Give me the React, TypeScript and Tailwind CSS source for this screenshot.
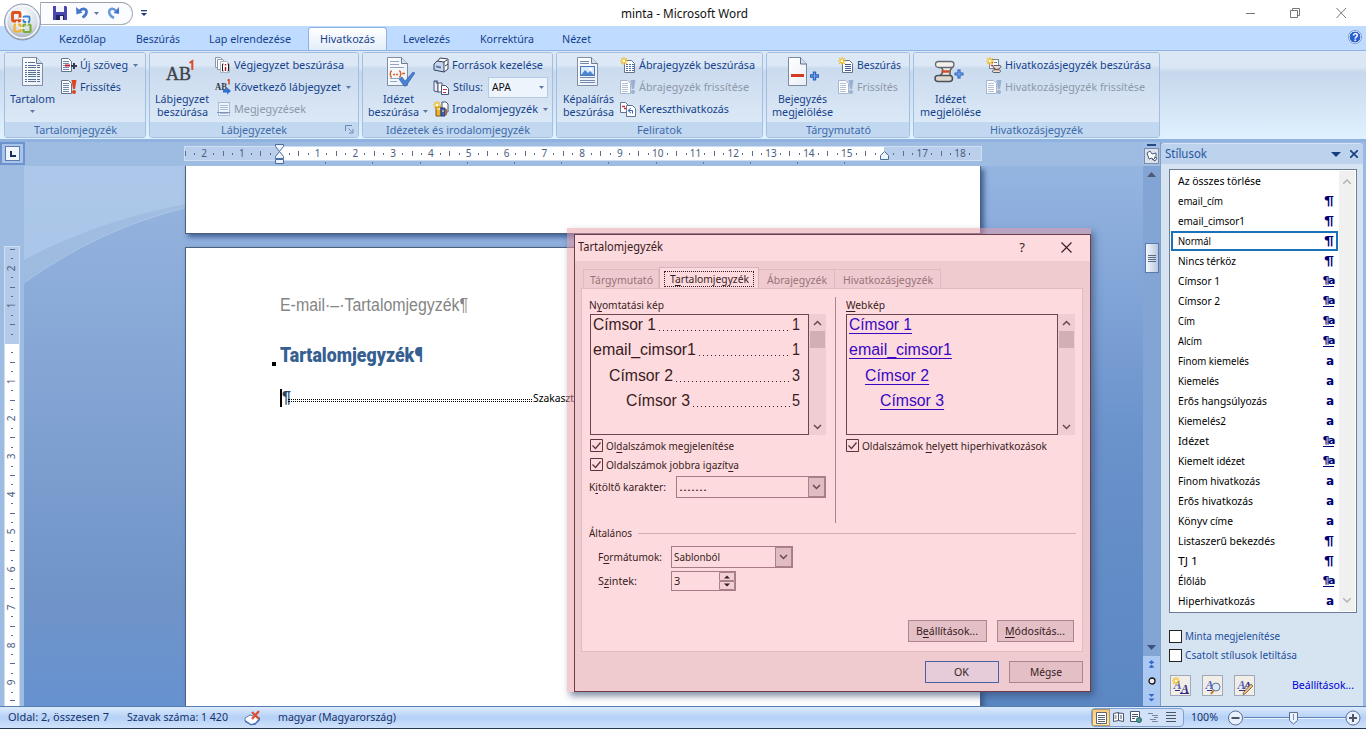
import { useLayoutEffect, useRef, type ReactNode } from "react";

type FitProps = { w: number; children: ReactNode; className?: string };

/* Sets a run of text to a given measure by condensing or widening the glyphs. */
function Fit({ w, children, className = "" }: FitProps) {
  const ref = useRef<HTMLSpanElement>(null);
  useLayoutEffect(() => {
    const el = ref.current;
    if (!el) return;
    el.style.transform = "none";
    const natural = el.getBoundingClientRect().width;
    el.style.transform = `scaleX(${w / natural})`;
    el.style.marginRight = `${w - natural}px`;
  }, [w]);
  return (
    <span ref={ref} className={`inline-block shrink-0 origin-left whitespace-pre ${className}`}>
      {children}
    </span>
  );
}

const Caret = ({ className = "" }: { className?: string }) => (
  <svg width="5" height="3" viewBox="0 0 5 3" className={`shrink-0 ${className}`}>
    <path d="M0 0h5L2.5 3z" fill="#5b78a8" />
  </svg>
);

/* ---------- icons ---------- */

const Star = () => (
  <g stroke="#f2b91d" strokeWidth="1.2">
    <path d="M4 0v8M0 4h8M1.2 1.2l5.6 5.6M6.8 1.2L1.2 6.8" />
    <circle cx="4" cy="4" r="1.4" fill="#fffbd0" stroke="none" />
  </g>
);

type IconName =
  | "addText" | "update" | "updateOff" | "endnote" | "nextNote" | "notes" | "sources"
  | "style" | "biblio" | "figures" | "crossref" | "index" | "authorities";

function Icon({ name }: { name: IconName }) {
  const doc = (x: number, y: number, w: number, h: number, c = "#65748e") => (
    <path d={`M${x} ${y}h${w - 3}l3 3v${h - 3}h-${w}z`} fill="#fff" stroke={c} strokeWidth="1" />
  );
  const lines = (x: number, y: number, w: number, n: number, c = "#6f8bb3") =>
    Array.from({ length: n }, (_, i) => <path key={i} d={`M${x} ${y + i * 2}h${w}`} stroke={c} strokeWidth="1" />);
  return (
    <svg width="16" height="16" viewBox="0 0 16 16" fill="none" className="shrink-0">
      {name === "addText" && (<>{doc(0.5, 1.5, 10, 13)}{lines(2, 4.5, 6, 5)}<path d="M4 8.500h5" stroke="#c8202c" strokeWidth="2" /><path d="M13 6v6M10 9h6" stroke="#333d55" strokeWidth="2" /></>)}
      {name === "update" && (<>{doc(0.5, 1.5, 10, 13)}{lines(2, 4.5, 6, 5)}<path d="M10.500 1h5l-1.500 9h-2z" fill="#dd4523" /><circle cx="13" cy="13" r="2" fill="#dd4523" /></>)}
      {name === "updateOff" && (<>{doc(0.5, 1.5, 10, 13, "#a6b6cf")}{lines(2, 4.5, 6, 5, "#b3c2d8")}<path d="M10.500 1h5l-1.500 9h-2z" fill="#9bb0d0" /><circle cx="13" cy="13" r="2" fill="#9bb0d0" /></>)}
      {name === "endnote" && (<>{doc(0.5, 0.5, 8, 10, "#8a96ab")}{doc(2.5, 2.5, 8, 10, "#8a96ab")}{doc(5.5, 4.5, 9, 11, "#a9b3c3")}<path d="M8.5 7h-1v7h1M12.500 7h1v7h-1" stroke="#222" /><path d="M10.500 7v1.500M10.500 10v4" stroke="#b02030" strokeWidth="1.500" /></>)}
      {name === "nextNote" && (<><text x="0" y="11" fontSize="10" fontFamily="Liberation Serif" fontWeight="bold" fill="#303848" textLength="12" lengthAdjust="spacingAndGlyphs">AB</text><path d="M12.500 1.500l1.500-1v5" stroke="#d83820" strokeWidth="1.400" /><path d="M8 10.500h4V8.500l4 3.500-4 3.500v-2H8z" fill="#2f6fd0" /></>)}
      {name === "notes" && (<><rect x="3.5" y="1.5" width="11" height="13" fill="#eef4fb" stroke="#a9bbd6" />{lines(5, 4.5, 8, 3, "#a9bbd6")}<path d="M2 11.5h13" stroke="#7d94ba" />{lines(5, 12.5, 8, 1, "#a9bbd6")}</>)}
      {name === "sources" && (<><path d="M4 5L7 1l8 1v10l-4 3z" fill="#fff" stroke="#35415c" /><path d="M1 7l3-3 7 1v10L1 13z" fill="#c7d5ea" stroke="#35415c" /><path d="M3 8.5l5 1v2l-5-1z" fill="#5c7db0" /><path d="M11 5l3-2M12 9l3-2" stroke="#35415c" /></>)}
      {name === "style" && (<><path d="M1 2v10l4 1V4zM4 2v3M1 2h4" stroke="#4a5878" fill="#e8eef7" /><path d="M5 4h4v9H5z" fill="#fff" stroke="#4a5878" />{doc(8.5, 6.5, 7, 9, "#4a5878")}<path d="M10 10.5h4M10 13.5h3" stroke="#b93048" /></>)}
      {name === "biblio" && (<><path d="M9 1h4l2 2v8H9z" fill="#fff" stroke="#44546f" /><path d="M3 6h5v9H3z" fill="#efb22b" stroke="#7b5a1a" /><path d="M8 7h4v8H8z" fill="#3b62bd" stroke="#24407d" /><path d="M12 8h2v6h-2z" fill="#aa6a35" /><path d="M4 8h3M9 10h2" stroke="#fff" /><Star /></>)}
      {name === "figures" && (<>{doc(4.5, 3.5, 10, 12)}<path d="M6 7.5h2m1 0h2m1 0h2M6 9.5h2m1 0h2m1 0h2M6 11.5h2m1 0h2m1 0h2M6 13.5h2m1 0h2m1 0h2" stroke="#4a69a5" /><Star /></>)}
      {name === "index" && (<>{doc(4.5, 3.5, 10, 12)}{lines(7, 7.5, 6, 4, "#3f5a8e")}<Star /></>)}
      {name === "crossref" && (<>{doc(0.5, 1.5, 8, 10)}<path d="M2 5.5h3M4 7.5h2" stroke="#c83048" strokeWidth="1.5" />{doc(6.5, 4.5, 9, 11)}<path d="M9 9.5h3.5v3M11 7l-3 2.5 3 2.5" stroke="#3461b8" /></>)}
      {name === "authorities" && (<><rect x="3.500" y="2.500" width="9" height="9" fill="#fff" stroke="#7d8595" /><path d="M5 5.500h2M5 8.500h2" stroke="#c8302c" strokeWidth="1.500" /><path d="M8 5.500h3M8 8.500h3" stroke="#66738c" /><path d="M8 8.500h6c1.500 0 1 2.500 0 2.500h-1l-.5 2h1c1.500 0 1 2.500 0 2.500H7.500c-1.500 0-1-2.500 0-2.500h1l.5-2H8c-1.500 0-1-2.500 0-2.500z" fill="#e5e1d8" stroke="#4d5058" strokeWidth=".9" /><path d="M9 12.500h3" stroke="#b74432" strokeWidth="1.300" /><Star /></>)}
    </svg>
  );
}

const BigDoc = ({ kind }: { kind: "toc" | "cite" | "caption" | "entry" }) => (
  <svg width="34" height="34" viewBox="0 0 34 34" fill="none">
    <defs>
      <linearGradient id={`pg-${kind}`} x1="0" y1="0" x2="1" y2="1">
        <stop offset="0" stopColor="#ffffff" /><stop offset="1" stopColor="#e9eef6" />
      </linearGradient>
    </defs>
    {kind === "entry" ? (
      <>
        <path d="M2.500 2.500h12l6 6.500v21.500h-18z" fill="url(#pg-entry)" stroke="#7c8aa2" />
        <path d="M14.500 2.500v6.500h6" fill="#d5dfed" stroke="#5f6f8b" />
        <path d="M5 20.500h13" stroke="#d13d1d" strokeWidth="3" />
        <path d="M28.500 16.500v9M24 21h9" stroke="#2d62bd" strokeWidth="3.400" />
        <path d="M28.500 17.500v7M25 21h7" stroke="#79a7ee" strokeWidth="1" />
      </>
    ) : (
      <>
        <path d="M6.500 2.500h14l6 6v22h-20z" fill={`url(#pg-${kind})`} stroke="#7f8da5" />
        <path d="M20.500 2.500v6h6" fill="#d5dfed" stroke="#6c7b95" />
      </>
    )}
    {kind === "toc" && <path d="M9 7.500h2m1 0h7M9 10.500h2m1 0h8m1 0h3M9 12.500h2m1 0h8m1 0h3M9 15.500h2m1 0h8m1 0h3M9 17.500h2m1 0h8m1 0h3M9 19.500h2m1 0h8m1 0h3M9 21.500h2m1 0h8m1 0h3M9 24.500h2m1 0h8m1 0h3M9 26.500h2m1 0h8m1 0h3" stroke="#566f97" />}
    {kind === "cite" && (
      <>
        <path d="M9 6.500h9M9 9.500h9M9 12.500h14M9 23.500h9M9 26.500h7" stroke="#91a5c4" />
        <path d="M11 16c-3 0 0 3-2.500 3 2.500 0-.5 3 2.500 3M18 16c3 0 0 3 2.500 3-2.500 0 .5 3-2.500 3" stroke="#d8632a" strokeWidth="1.300" />
        <path d="M12 19.500h2m1 0h2M21 18.500h3" stroke="#d8632a" strokeWidth="1.300" />
        <path d="M18 24l3-2 3 4 8-9 2 1-9 13h-2z" fill="#4a80d0" stroke="#2a5eb0" strokeWidth=".6" />
      </>
    )}
    {kind === "caption" && (
      <>
        <path d="M9 6.500h9M9 8.500h9M9 22.500h15M9 25.500h15M9 27.500h15" stroke="#7288aa" />
        <rect x="9.500" y="11.500" width="14" height="9" fill="#d9ecff" stroke="#4b78bd" />
        <path d="M10 20l4-5 3 3 2-2 4 4z" fill="#4d86cf" /><circle cx="19.500" cy="14" r="1.300" fill="#fff" />
      </>
    )}
  </svg>
);

const FootnoteIcon = () => (
  <svg width="34" height="34" viewBox="0 0 34 34" fill="none">
    <text x="1" y="25" fontSize="19" fontFamily="Liberation Serif" fill="#3e4348" stroke="#3e4348" strokeWidth=".4" textLength="25" lengthAdjust="spacingAndGlyphs">AB</text>
    <path d="M24.500 8l2.800-1.800V15" stroke="#e04726" strokeWidth="2" />
  </svg>
);

const ScrollIcon = () => (
  <svg width="34" height="34" viewBox="0 0 34 34" fill="none">
    <path d="M9 9h11c0 3-3 4-3 7 0 2 1 4 1 6H6c3-2 4-4 4-7 0-2-1-3-1-6z" fill="#eeece6" />
    <path d="M8 12.500c4 3 1 7-2 9M20 12c-4 3-4 6-2 9.500" stroke="#55585e" strokeWidth="1.500" />
    <rect x="2.500" y="6.500" width="18.500" height="6" rx="3" fill="#f3f1eb" stroke="#66696f" strokeWidth="1.300" />
    <rect x="2" y="20.500" width="17.500" height="6" rx="3" fill="#dcd8cf" stroke="#4d5056" strokeWidth="1.500" />
    <path d="M8.500 16.500h8" stroke="#cc4d2a" strokeWidth="2.600" />
    <path d="M26 14.500v9M21.500 19h9" stroke="#2d62bd" strokeWidth="3.200" />
    <path d="M26 15.500v7M22.500 19h7" stroke="#86b0f0" strokeWidth="1" />
  </svg>
);

/* ---------- ribbon ---------- */

function Small({ icon, w, text, caret, off }: { icon: IconName; w: number; text: string; caret?: boolean; off?: boolean }) {
  return (
    <div className={`flex h-[22px] items-center ${off ? "text-[#8d98aa]" : "text-[#15428b]"}`}>
      <Icon name={icon} />
      <Fit w={w} className="ml-[3px]">{text}</Fit>
      {caret && <Caret className="ml-[5px]" />}
    </div>
  );
}

function Group({ width, label, lw, launcher, children }: { width: string; label: string; lw: number; launcher?: boolean; children: ReactNode }) {
  return (
    <section className={`flex h-[86px] shrink-0 flex-col overflow-hidden rounded-[3px] border border-[#a3bfe0] shadow-[inset_1px_1px_0_#e4eefa] ${width}`}>
      <div className="flex h-[69px] bg-linear-to-b from-[#dce8f6] from-18% via-[#cbdbee] via-22% to-[#dbe8f6] pt-px">{children}</div>
      <div className="flex h-[15px] items-center justify-center bg-[#c1d8f0] text-[#3e6aaa]">
        <Fit w={lw}>{label}</Fit>
        {launcher && (
          <svg width="9" height="9" viewBox="0 0 9 9" className="absolute ml-[190px]" fill="none" stroke="#6986b4">
            <path d="M.5 6V.5H7M3.500 3.500l3 3M8 4v4H4" />
          </svg>
        )}
      </div>
    </section>
  );
}

function Big({ className, icon, children }: { className: string; icon: ReactNode; children: ReactNode }) {
  return (
    <div className={`flex shrink-0 flex-col items-center pt-px text-[#15428b] ${className}`}>
      <div className="h-[37px]">{icon}</div>
      <div className="flex flex-col items-center leading-[13px]">{children}</div>
    </div>
  );
}

function Ribbon() {
  return (
    <div className="flex h-[92px] shrink-0 items-start border-b-[3px] border-t border-b-[#8fb2e0] border-t-[#8db2e3] bg-linear-to-b from-[#dbe7f5] from-18% via-[#c7d8ed] via-24% to-[#e0f1ff] px-1 pt-px text-[11.5px] leading-[14px]">
      <div className="flex gap-[3px]">
        <Group width="w-[142px]" label="Tartalomjegyzék" lw={83}>
          <Big className="w-[56px] pr-px" icon={<BigDoc kind="toc" />}>
            <Fit w={45}>Tartalom</Fit><Caret className="mt-[5px]" />
          </Big>
          <div>
            <Small icon="addText" w={48} text="Új szöveg" caret />
            <Small icon="update" w={41} text="Frissítés" />
          </div>
        </Group>
        <Group width="w-[210px]" label="Lábjegyzetek" lw={66} launcher>
          <Big className="w-[65px] pr-px" icon={<FootnoteIcon />}>
            <Fit w={54}>Lábjegyzet</Fit><Fit w={51}>beszúrása</Fit>
          </Big>
          <div>
            <Small icon="endnote" w={110} text="Végjegyzet beszúrása" />
            <Small icon="nextNote" w={107} text="Következő lábjegyzet" caret />
            <Small icon="notes" w={72} text="Megjegyzések" off />
          </div>
        </Group>
        <Group width="w-[191px]" label="Idézetek és irodalomjegyzék" lw={144}>
          <Big className="w-[70px]" icon={<BigDoc kind="cite" />}>
            <Fit w={31}>Idézet</Fit>
            <span className="flex items-center"><Fit w={51}>beszúrása</Fit><Caret className="ml-1" /></span>
          </Big>
          <div>
            <Small icon="sources" w={91} text="Források kezelése" />
            <div className="flex h-[22px] items-center text-[#15428b]">
              <Icon name="style" /><Fit w={30} className="ml-1">Stílus:</Fit>
              <div className="ml-[5px] flex h-[21px] w-[60px] items-center justify-between border border-[#b4cbe8] bg-[#edf4fc] px-[3px] text-[#111]">
                <Fit w={19}>APA</Fit><Caret />
              </div>
            </div>
            <Small icon="biblio" w={86} text="Irodalomjegyzék" caret />
          </div>
        </Group>
        <Group width="w-[207px]" label="Feliratok" lw={45}>
          <Big className="w-[63px] pr-px" icon={<BigDoc kind="caption" />}>
            <Fit w={51}>Képaláírás</Fit><Fit w={51}>beszúrása</Fit>
          </Big>
          <div>
            <Small icon="figures" w={116} text="Ábrajegyzék beszúrása" />
            <Small icon="updateOff" w={110} text="Ábrajegyzék frissítése" off />
            <Small icon="crossref" w={90} text="Kereszthivatkozás" />
          </div>
        </Group>
        <Group width="w-[144px]" label="Tárgymutató" lw={65}>
          <Big className="w-[71px]" icon={<BigDoc kind="entry" />}>
            <Fit w={49}>Bejegyzés</Fit><Fit w={61}>megjelölése</Fit>
          </Big>
          <div>
            <Small icon="index" w={44} text="Beszúrás" />
            <Small icon="updateOff" w={41} text="Frissítés" off />
          </div>
        </Group>
        <Group width="w-[247px]" label="Hivatkozásjegyzék" lw={93}>
          <Big className="w-[72px]" icon={<ScrollIcon />}>
            <Fit w={31}>Idézet</Fit><Fit w={61}>megjelölése</Fit>
          </Big>
          <div>
            <Small icon="authorities" w={146} text="Hivatkozásjegyzék beszúrása" />
            <Small icon="updateOff" w={140} text="Hivatkozásjegyzék frissítése" off />
          </div>
        </Group>
      </div>
    </div>
  );
}

function TitleBar() {
  return (
    <header className="flex h-[26px] shrink-0 items-center bg-white text-[#111]">
      <div className="ml-[40px] flex h-[23px] w-[93px] items-center rounded-r-full border border-t-[#9aa0aa] border-[#a9b0bb] bg-[#fafcff] pl-3">
        <svg width="14" height="14" viewBox="0 0 14 14" className="shrink-0">
          <path d="M0 0h13l1 1v13H0z" fill="#4a46b0" /><path d="M3 0h8v6H3z" fill="#f3f5ff" /><path d="M3 9h8v5H3z" fill="#26215f" /><path d="M7 10h3v4H7z" fill="#eee" />
        </svg>
        <svg width="14" height="14" viewBox="0 0 14 14" fill="none" className="ml-2 shrink-0">
          <path d="M4 5.500c4-4.500 8-2.500 7.500 1-.3 2-1.500 3.500-4 5" stroke="#4577c8" strokeWidth="2.600" /><path d="M1 1l.5 7.500 6-2z" fill="#4577c8" />
        </svg>
        <Caret className="ml-[5px]" />
        <svg width="14" height="14" viewBox="0 0 14 14" fill="none" className="ml-2 shrink-0">
          <path d="M9 5C6 1 1 3 2.500 7.500 3 10 5 11 7 12" stroke="#6b9ad8" strokeWidth="2.600" /><path d="M12 1v7L6.500 7z" fill="#4577c8" />
        </svg>
      </div>
      <svg width="6" height="7" viewBox="0 0 6 7" className="ml-2"><path d="M0 0h6v1.300H0zM0 3h6L3 6z" fill="#1e3e78" /></svg>
      <div className="ml-[474px] pt-[2px] text-[12px]"><Fit w={127}>minta - Microsoft Word</Fit></div>
      <svg width="102" height="12" viewBox="0 0 102 12" fill="none" stroke="#777" className="ml-auto mr-[19px]">
        <path d="M1 6.500h9" /><path d="M45.500 3.500h7v7h-7zM47.500 3V1.500h7v7H53" /><path d="M91.500 1l9.500 10M101 1l-9.500 10" />
      </svg>
    </header>
  );
}

function OfficeButton() {
  return (
    <svg width="40" height="40" viewBox="0 0 40 40" className="absolute left-[2px] top-[2px]" fill="none">
      <defs>
        <radialGradient id="orb" cx=".5" cy=".3" r=".75"><stop offset="0" stopColor="#fff" /><stop offset=".6" stopColor="#d6dce6" /><stop offset="1" stopColor="#8b97aa" /></radialGradient>
      </defs>
      <circle cx="20.500" cy="20" r="18" fill="url(#orb)" stroke="#8e9bb0" />
      <circle cx="20.500" cy="20" r="16" stroke="#f7f9fc" strokeWidth="1.500" />
      <rect x="10.500" y="10.500" width="7.500" height="8.500" rx="1" stroke="#dd521c" strokeWidth="2.800" />
      <rect x="21.500" y="14.500" width="6" height="5.500" rx="1" stroke="#3b83cf" strokeWidth="1.800" />
      <rect x="12.500" y="22.500" width="6" height="7" rx="1" stroke="#f2b02b" strokeWidth="2.200" />
      <rect x="21.500" y="22.500" width="7" height="7.500" rx="1" stroke="#79ae35" strokeWidth="2.200" />
      <path d="M17 16.500h6M17 26h6M15 19v5M25 18v5" stroke="#fff" strokeWidth="1.500" />
    </svg>
  );
}

function Tabs() {
  return (
    <nav className="flex h-[24px] shrink-0 items-center bg-[#bfdbff] pt-[2px] text-[11.5px] text-[#15428b]">
      <Fit w={47} className="ml-[59px]">Kezdőlap</Fit>
      <Fit w={44} className="ml-[30px]">Beszúrás</Fit>
      <Fit w={82} className="ml-[29px]">Lap elrendezése</Fit>
      <div className="ml-[17px] flex h-[23px] w-[79px] items-center justify-center self-end rounded-t-[3px] border border-b-0 border-[#8db2e3] bg-linear-to-b from-white to-[#e3edf9]">
        <Fit w={55}>Hivatkozás</Fit>
      </div>
      <Fit w={47} className="ml-[16px]">Levelezés</Fit>
      <Fit w={54} className="ml-[30px]">Korrektúra</Fit>
      <Fit w={29} className="ml-[28px]">Nézet</Fit>
      <svg width="14" height="14" viewBox="0 0 14 14" className="mb-[4px] ml-auto mr-1">
        <circle cx="7" cy="7" r="6" fill="#2a60cf" stroke="#fff" /><circle cx="7" cy="7" r="6.600" fill="none" stroke="#5c83c5" strokeWidth=".7" />
        <text x="4.200" y="10.600" fontSize="10" fontWeight="bold" fontFamily="Liberation Sans" fill="#fff">?</text>
      </svg>
    </nav>
  );
}

/* ---------- rulers and pages ---------- */

const hMarks = ["2", "1", "", "1", "2", "3", "4", "5", "6", "7", "8", "9", "10", "11", "12", "13", "14", "15", "", "17", "18"];
const vMarks = ["2", "1", "", "1", "2", "3", "4", "5", "6", "7", "8", "9"];

function HRuler() {
  return (
    <div className="flex h-[24px] shrink-0">
      <div className="flex h-[23px] w-[25px] items-center justify-center border-2 border-[#6d93cf] bg-[#a9c4e8]">
        <div className="flex h-[15px] w-[15px] items-center justify-center border border-[#5c7db4] bg-[#f0f5fc]">
          <div className="h-[6px] w-[6px] border-b-2 border-l-2 border-[#16305c]" />
        </div>
      </div>
      <div className="ml-[160px] w-[796px]">
        <div className="mt-[5px] flex h-[13px] overflow-hidden bg-linear-to-r from-[#b9cfec] from-[94px] via-white via-[94px] to-white outline outline-[#cfdff3]">
          <div className="-ml-[4.5px] flex bg-linear-to-r from-transparent from-[703px] to-[#b9cfec] to-[703px]">
            {hMarks.map((m, i) => (
              <div key={i} className="grid w-[37.8px] shrink-0 grid-cols-4 items-center justify-items-center text-[10px] leading-[13px] text-[#4b5d80]">
                <i className="h-[5px] w-px bg-[#5b6b8c]" /><i className="h-[2px] w-px bg-[#5b6b8c]" />
                <span>{m}</span><i className="h-[2px] w-px bg-[#5b6b8c]" />
              </div>
            ))}
          </div>
          <div className="grow bg-[#b9cfec]" />
        </div>
        <div className="ml-[94px] mt-[2px] flex h-[2px] overflow-hidden">
          {Array.from({ length: 12 }, (_, i) => <i key={i} className="w-[47.2px] shrink-0 border-r border-[#5c7cae]" />)}
        </div>
      </div>
      <svg width="620" height="22" viewBox="0 0 620 22" className="absolute left-[270px] top-[143px]" fill="#eef4fc" stroke="#4c6ba1">
        <path d="M5.500 1.500h8v2l-4 5 4 5v2h-8v-2l4-5-4-5zM5.500 16.500h8v4h-8zM614.500 8.500l4 4v4h-8v-4z" />
      </svg>
    </div>
  );
}

function VRuler() {
  return (
    <div className="w-[24px] shrink-0 bg-[#9ebbe2] pt-[81px]">
      <div className="ml-[5px] flex h-[459px] w-[14px] flex-col overflow-hidden bg-linear-to-b from-[#b4caeb] from-[97px] to-white to-[97px] outline outline-[#cfdff3]">
        {vMarks.map((m, i) => (
          <div key={i} className="-mt-[2.4px] mb-[2.4px] grid h-[37.7px] shrink-0 grid-rows-4 items-center justify-items-center text-[10px] leading-[9px] text-[#4b5d80]">
            <i className="h-px w-[5px] bg-[#5b6b8c]" /><i className="h-px w-[2px] bg-[#5b6b8c]" />
            <span className="-rotate-90">{m}</span><i className="h-px w-[2px] bg-[#5b6b8c]" />
          </div>
        ))}
        <i className="mt-px h-px w-[5px] shrink-0 self-center bg-[#5b6b8c]" />
      </div>
    </div>
  );
}

function Canvas() {
  return (
    <div className="relative w-[1119px] overflow-hidden bg-linear-to-b from-[#9bb9e3] via-[#7397ca] via-50% to-[#6591cd]">
      <div className="absolute inset-y-0 left-0 w-[161px] bg-linear-to-b from-[#97b5e0] via-[#7094c8] via-50% via-[#5a81b8] via-80% to-[#6692d0]" />
      <div className="absolute inset-y-0 right-0 w-[163px] bg-linear-to-b from-[#95b5e1] via-[#6a92cb] via-50% to-[#5b87c3]" />
      <svg width="161" height="120" viewBox="0 0 161 120" className="absolute left-0 top-0">
        <path d="M0 0h161v42Q75 63 0 117z" fill="#b7cfe9" opacity=".4" />
        <path d="M0 0h161v38Q70 56 0 94z" fill="#b3cdec" opacity=".6" />
        <path d="M0 117Q75 63 161 42" fill="none" stroke="#b6cee9" opacity=".6" />
      </svg>
      <div className="relative ml-[161px] flex h-full w-[796px] flex-col">
        <div className="h-[68px] shrink-0 border border-t-0 border-[#4e5f7e] bg-white shadow-[3px_3px_5px_#3f5f92]" />
        <div className="mt-[13px] h-[470px] shrink-0 border border-[#4e5f7e] bg-white pl-[94px] shadow-[3px_3px_5px_#3f5f92]">
          <div className="mt-[46px] h-[22px] font-['Liberation_Sans'] text-[17.5px] leading-[22px] text-[#858585]">
            <Fit w={188}>E-mail·–·Tartalomjegyzék¶</Fit>
          </div>
          <div className="-ml-[8px] mt-[27px] flex h-[24px] items-center gap-[4px] font-[Roboto] text-[20.5px] font-black leading-[24px] text-[#365f91]">
            <i className="mt-[18px] h-[4px] w-[4px] bg-black" />
            <Fit w={143}>Tartalomjegyzék¶</Fit>
          </div>
          <div className="mt-[21px] flex h-[20px] items-center text-[11px] text-black">
            <i className="h-[18px] w-[2px] bg-black" />
            <span className="w-[6px] font-['Liberation_Sans'] text-[16px] font-bold leading-[18px] text-[#274766]">¶</span>
            <i className="mt-[5px] h-[3px] w-[244px] border-y border-dotted border-black" />
            <Fit w={41} className="ml-px pt-px">Szakaszt</Fit>
          </div>
        </div>
      </div>
    </div>
  );
}

function VScroll() {
  return (
    <div className="flex w-[17px] shrink-0 flex-col items-center bg-[#83a5d5] text-[#2f4a7c]">
      <div className="flex h-[24px] w-full shrink-0 flex-col items-center bg-[#a1bee6]">
        <i className="mt-[2px] h-[2px] w-[9px] shrink-0 bg-[#264785]" />
        <div className="mt-[2px] flex h-[16px] w-[15px] items-center justify-center border border-[#7d8ba5] bg-[#dae2ee]">
          <svg width="12" height="12" viewBox="0 0 12 12" fill="#fff" stroke="#46587a"><path d="M1 3l3-2 2 3 4-1v4l-3 3-1-2-3 1zM8 7l3 1-2 3-3-2" /></svg>
        </div>
      </div>
      <svg width="9" height="5" className="mt-[6px] shrink-0"><path d="M4.500 0L9 5H0z" fill="#4e5b75" /></svg>
      <div className="mt-[66px] flex h-[30px] w-[14px] shrink-0 flex-col items-center justify-center gap-[1px] border border-[#5b78a8] bg-linear-to-r from-[#f4f8fd] to-[#b7c8df]">
        {[0, 1, 2, 3].map((i) => <i key={i} className="h-px w-[8px] bg-[#5a6b88]" />)}
      </div>
      <svg width="9" height="5" className="mt-[372px] shrink-0"><path d="M0 0h9L4.500 5z" fill="#3a527d" /></svg>
      <div className="mt-[6px] flex w-full grow flex-col items-center justify-around bg-[#abc9f3]">
        <svg width="7" height="9" fill="#3567c4"><path d="M3.500 0L6.500 3h-6zM3.500 4.500l3 3h-6zM2.500 3h2v1h-2zM2.500 7h2v1h-2z" /></svg>
        <svg width="8" height="8"><circle cx="4" cy="4" r="3" fill="#eee" stroke="#111" strokeWidth="1.300" /></svg>
        <svg width="7" height="9" fill="#3567c4"><path d="M3.500 4L.5 1h6zM3.500 8.500l-3-3h6z" /></svg>
      </div>
    </div>
  );
}

/* ---------- styles pane ---------- */

type Kind = "" | "p" | "pa" | "a";
const styleRows: [string, number, Kind][] = [
  ["Az összes törlése", 83, ""], ["email_cím", 45, "p"], ["email_cimsor1", 67, "p"], ["Normál", 33, "p"],
  ["Nincs térköz", 58, "p"], ["Címsor 1", 42, "pa"], ["Címsor 2", 42, "pa"], ["Cím", 17, "pa"], ["Alcím", 24, "pa"],
  ["Finom kiemelés", 71, "a"], ["Kiemelés", 41, "a"], ["Erős hangsúlyozás", 89, "a"], ["Kiemelés2", 48, "a"],
  ["Idézet", 31, "pa"], ["Kiemelt idézet", 67, "pa"], ["Finom hivatkozás", 82, "a"], ["Erős hivatkozás", 75, "a"],
  ["Könyv címe", 55, "a"], ["Listaszerű bekezdés", 97, "p"], ["TJ 1", 20, "p"], ["Élőláb", 28, "pa"], ["Hiperhivatkozás", 77, "a"],
];

const PaneButton = ({ kind }: { kind: "new" | "inspect" | "manage" }) => (
  <div className="flex h-[21px] w-[21px] items-center justify-center border border-[#9ea8b8] bg-[#f1eee8]">
    <svg width="18" height="18" viewBox="0 0 18 18">
      <text x="1.500" y="12" fontFamily="Liberation Serif" fontStyle="italic" fontWeight="bold" fontSize="12" fill="#5263bf">A</text>
      {kind === "new" && <><text x="9" y="16" fontFamily="Liberation Serif" fontStyle="italic" fontWeight="bold" fontSize="12" fill="#352e83">A</text><path d="M3 13.500h5M8 16.500h9" stroke="#352e83" /><Star /></>}
      {kind === "inspect" && <><path d="M3 13.500h5" stroke="#352e83" /><circle cx="12" cy="10" r="4" fill="#d7eafb" stroke="#66758d" /><path d="M10 13l-3 4" stroke="#b37b34" strokeWidth="2" /></>}
      {kind === "manage" && <><text x="8" y="12" fontFamily="Liberation Serif" fontStyle="italic" fontWeight="bold" fontSize="11" fill="#352e83">A</text><path d="M3 13.500h6" stroke="#352e83" /><path d="M15 7l2 2-8 8-2 .5.500-2z" fill="#e8bf83" stroke="#704b2d" strokeWidth=".7" /></>}
    </svg>
  </div>
);

function StylesPane() {
  return (
    <aside className="flex w-[206px] shrink-0 flex-col border-l border-[#7f9fcd] bg-[#9bb9e3] pr-[3px] pt-px text-[11px]">
      <div className="flex h-[21px] shrink-0 items-center rounded-t-sm border-t border-[#d5e4f6] bg-[#bcd2ed] pl-[4px] pr-[5px] text-[12px] text-[#28569c]">
        <Fit w={42}>Stílusok</Fit>
        <svg width="10" height="5" className="ml-auto"><path d="M0 0h10L5 5z" fill="#153f7d" /></svg>
        <svg width="8" height="8" viewBox="0 0 8 8" className="ml-[9px]"><path d="M0 0l8 8M8 0L0 8" stroke="#153f7d" strokeWidth="1.600" /></svg>
      </div>
      <div className="flex grow flex-col bg-[#d6e4f2] pl-[8px] pt-[5px]">
        <div className="flex h-[444px] w-[188px] shrink-0 border border-[#6b7c94] bg-white p-px">
          <div className="w-[167px] shrink-0">
            {styleRows.map(([name, w, kind]) => (
              <div key={name} className={`flex h-[20px] items-center justify-between border-2 pl-[5px] pr-[2px] text-black ${name === "Normál" ? "border-[#1a73b8]" : "border-transparent"}`}>
                <Fit w={w} className="pt-px">{name}</Fit>
                {kind === "p" && <Fit w={10} className="font-['Liberation_Sans'] text-[13px] font-bold leading-[14px] text-[#000073]">¶</Fit>}
                {kind === "pa" && <span className="border-b border-[#000073] font-['DejaVu_Sans'] text-[11px] font-bold leading-[10px] tracking-[-1.5px] text-[#000073]">¶a</span>}
                {kind === "a" && <span className="font-['DejaVu_Sans'] text-[12px] font-bold leading-[14px] text-[#000073]">a</span>}
              </div>
            ))}
          </div>
          <div className="ml-px flex grow flex-col items-center justify-between bg-[#f0f0f0] py-[8px]">
            <svg width="8" height="5" fill="none" stroke="#b4b4b4" strokeWidth="1.500"><path d="M0 5l4-4 4 4" /></svg>
            <svg width="8" height="5" fill="none" stroke="#b4b4b4" strokeWidth="1.500"><path d="M0 0l4 4 4-4" /></svg>
          </div>
        </div>
        <div className="mt-[14px] flex h-[19px] items-center gap-[3px] text-[#1e4f9c]"><i className="h-[13px] w-[13px] border border-[#222] bg-white" /><Fit w={95}>Minta megjelenítése</Fit></div>
        <div className="flex h-[19px] items-center gap-[3px] text-[#1e4f9c]"><i className="h-[13px] w-[13px] border border-[#222] bg-white" /><Fit w={112}>Csatolt stílusok letiltása</Fit></div>
        <div className="mt-[10px] flex items-center gap-[11px] pl-px">
          <PaneButton kind="new" /><PaneButton kind="inspect" /><PaneButton kind="manage" />
          <Fit w={62} className="ml-[26px] text-[#0000d8]">Beállítások...</Fit>
        </div>
      </div>
    </aside>
  );
}

/* ---------- status bar ---------- */

const Divider = () => <i className="h-[19px] w-px bg-[#8fb1df] shadow-[1px_0_0_#edf5ff]" />;

function StatusBar() {
  return (
    <footer className="flex h-[23px] shrink-0 items-center border-b border-t border-b-[#24364f] border-t-[#567db1] bg-linear-to-b from-[#dceafc] via-[#b5d1f7] via-50% to-[#d0e2fb] text-[11px] text-[#15326b]">
      <Fit w={101} className="ml-[8px]">Oldal: 2, összesen 7</Fit>
      <div className="ml-[8px]"><Divider /></div>
      <Fit w={101} className="ml-[10px]">Szavak száma: 1 420</Fit>
      <div className="ml-[8px]"><Divider /></div>
      <svg width="18" height="16" viewBox="0 0 18 16" className="ml-[8px]">
        <path d="M1 8l5-3 10 3-5 6-4 1-6-4z" fill="#f8fbff" stroke="#687caa" /><path d="M1 10l6 4 4-1 5-5v2l-5 5H7l-6-3z" fill="#476fb8" /><path d="M8 2l7 7M15 1L8 9" stroke="#e04e32" strokeWidth="2.200" />
      </svg>
      <Fit w={118} className="ml-[16px]">magyar (Magyarország)</Fit>
      <div className="ml-[8px]"><Divider /></div>
      <div className="ml-auto"><Divider /></div>
      <div className="ml-[5px] flex h-[19px] w-[93px] items-center rounded-sm border border-[#7f9fcf] bg-[#d1e2f8]">
        <div className="flex h-full w-[18px] items-center justify-center border border-[#b6996b] bg-linear-to-b from-[#f6c982] to-[#ffe9a4]">
          <svg width="11" height="12"><path d="M.5.500h10v11H.5z" fill="#fff" stroke="#5d6574" /><path d="M2 3.500h7M2 5.500h7M2 7.500h7M2 9.500h7" stroke="#5d6574" /></svg>
        </div>
        <svg width="72" height="13" viewBox="0 0 72 13" fill="none" stroke="#4a5568">
          <path d="M3.500 2.500l5-1v8l-5 1zM8.500 2l5 .5v8l-5-1z" fill="#fff" /><path d="M4.500 5h2M10 5h2M4.500 7h2M10 7h2" />
          <path d="M20.500.5h9v10h-9z" fill="#fff" /><path d="M22 3.500h6M22 5.500h6M22 7.500h3" /><circle cx="29" cy="9" r="2.500" fill="#4f9e74" stroke="#28648b" />
          <path d="M38 2.500h5M42 4.500h6M44 6.500h4M40 8.500h6M42 10.500h6" stroke="#7b8799" />
          <path d="M56 1.500h10M56 4.500h10M56 7.500h10M56 10.500h10" />
        </svg>
      </div>
      <Fit w={27} className="ml-[7px]">100%</Fit>
      <svg width="135" height="20" viewBox="0 0 135 20" className="ml-[8px] mr-[5px]" fill="none">
        <path d="M18 9.500h102" stroke="#5d7eb5" /><path d="M18 10.500h102" stroke="#edf5ff" />
        <circle cx="9.500" cy="10" r="7" fill="#e7f0fc" stroke="#5c6f91" /><path d="M5.500 10h8" stroke="#4c5568" strokeWidth="2" />
        <circle cx="127" cy="10" r="7" fill="#e7f0fc" stroke="#5c6f91" /><path d="M123 10h8M127 6v8" stroke="#4c5568" strokeWidth="2" />
        <path d="M63.500 4.500h8v8l-4 3.500-4-3.500z" fill="#eaf2fd" stroke="#5c6f91" /><path d="M67.500 6v6" stroke="#8093b6" />
      </svg>
    </footer>
  );
}

/* ---------- dialog ---------- */

const Check = ({ w, children }: { w: number; children: ReactNode }) => (
  <div className="flex h-[19px] items-center gap-[3px]">
    <svg width="13" height="13" viewBox="0 0 13 13" fill="none" stroke="#5e343c"><path d="M.5.500h12v12H.5z" /><path d="M2.500 6.500l3 3 5-6" strokeWidth="1.300" /></svg>
    <Fit w={w}>{children}</Fit>
  </div>
);

const Down = ({ up }: { up?: boolean }) => (
  <svg width="9" height="6" fill="none" stroke="#694951" strokeWidth="1.500"><path d={up ? "M1 5l3.500-3.500L8 5" : "M1 1l3.500 3.500L8 1"} /></svg>
);

const Scroll = () => (
  <div className="flex h-[121px] w-[17px] flex-col items-center bg-[#f0cdd2] pt-[6px]">
    <Down up />
    <i className="mt-[5px] h-[17px] w-[15px] bg-[#d1afb4]" />
    <div className="mb-[5px] mt-auto leading-none"><Down /></div>
  </div>
);

const Combo = ({ className, children }: { className: string; children: ReactNode }) => (
  <div className={`flex h-[22px] items-center border border-[#a77c84] pl-[2px] ${className}`}>
    {children}
    <div className="ml-auto flex h-full w-[17px] items-center justify-center border border-[#ab8289] bg-[#e1bdc3]"><Down /></div>
  </div>
);

const toc: [string, string, number, string][] = [
  ["Címsor 1", "1", 63, "pl-0"], ["email_cimsor1", "1", 103, "pl-0"], ["Címsor 2", "3", 64, "pl-[16px]"], ["Címsor 3", "5", 64, "pl-[33px]"],
];

const U = ({ children }: { children: ReactNode }) => <span className="underline underline-offset-2">{children}</span>;
const button = "flex h-[22px] items-center justify-center border pr-px";

function Dialog() {
  return (
    <div className="absolute left-[567px] top-[228px] bg-[#e79aa5]/50 pl-[7px] pt-[6px] shadow-[3px_4px_7px_#354b72a0]">
      <div className="flex h-[458px] w-[517px] flex-col border border-[#6d3d49] bg-[#efcbcf] text-[11px] leading-[14px] text-[#391c23]">
        <div className="flex h-[26px] shrink-0 items-center bg-[#fddadd] pb-[2px] pl-[3px] pr-[18px]">
          <Fit w={85} className="text-[12px]">Tartalomjegyzék</Fit>
          <span className="ml-auto text-[13px]">?</span>
          <svg width="11" height="11" viewBox="0 0 11 11" className="ml-[36px]"><path d="M.5.500l10 10M10.500.500l-10 10" stroke="#3a1820" strokeWidth="1.100" /></svg>
        </div>
        <div className="ml-[8px] mt-[6px] flex h-[22px] shrink-0 items-end text-[#98737a]">
          <div className="flex h-[20px] w-[76px] items-center justify-center border border-b-0 border-[#dfbbc0]"><Fit w={63}>Tárgymutató</Fit></div>
          <div className="flex h-[22px] w-[100px] items-center justify-center border border-b-0 border-[#d8b3b8] bg-[#fddadd] text-[#391c23]">
            <div className="flex h-[16px] w-[90px] items-center justify-center border border-dotted border-[#391c23]"><Fit w={79}>T<U>a</U>rtalomjegyzék</Fit></div>
          </div>
          <div className="flex h-[20px] w-[76px] items-center justify-center border border-b-0 border-l-0 border-[#dfbbc0]"><Fit w={60}>Ábrajegyzék</Fit></div>
          <div className="flex h-[20px] w-[106px] items-center justify-center border border-b-0 border-l-0 border-[#dfbbc0]"><Fit w={90}>Hivatkozásjegyzék</Fit></div>
        </div>
        <div className="-mt-px ml-[6px] flex h-[364px] w-[502px] shrink-0 flex-col border border-[#dfbbc0] bg-[#fddadd] pl-[8px]">
          <div className="flex h-[234px] pt-[8px]">
            <div className="w-[246px] border-r border-[#a9858b]">
              <div className="-ml-px h-[17px] pt-px"><Fit w={75}>N<U>y</U>omtatási kép</Fit></div>
              <div className="flex">
                <div className="h-[121px] w-[219px] border border-[#6e454d] pl-[2px] pr-[8px] pt-px font-['Liberation_Sans'] text-[16px]">
                  {toc.map(([t, n, w, pad]) => (
                    <div key={t} className={`flex h-[25.3px] items-start leading-[18px] ${pad}`}>
                      <Fit w={w}>{t}</Fit>
                      <i className="ml-[3px] mr-[2px] mt-[14px] h-px grow bg-[repeating-linear-gradient(to_right,#391c23_0_1.5px,transparent_1.5px_4px)]" />
                      <Fit w={8}>{n}</Fit>
                    </div>
                  ))}
                </div>
                <Scroll />
              </div>
              <div className="mt-px"><Check w={128}>Ol<U>d</U>alszámok megjelenítése</Check><Check w={133}>Oldalszámok jobbra igazít<U>v</U>a</Check></div>
              <div className="mt-[2px] flex items-center"><Fit w={77} className="-ml-px">K<U>i</U>töltő karakter:</Fit><Combo className="ml-[10px] w-[150px]"><Fit w={28}>.......</Fit></Combo></div>
            </div>
            <div className="ml-[10px]">
              <div className="h-[17px] pt-px"><Fit w={39}><U>W</U>ebkép</Fit></div>
              <div className="flex">
                <div className="h-[121px] w-[212px] border border-[#6e454d] pl-[2px] pt-px font-['Liberation_Sans'] text-[16px] text-[#3a08c4]">
                  {toc.map(([t, , w, pad], i) => (
                    <div key={t} className={`h-[25.3px] leading-[18px] ${i === 3 ? "pl-[31px]" : pad}`}><Fit w={w} className="border-b border-[#3a08c4] leading-[17px]">{t}</Fit></div>
                  ))}
                </div>
                <Scroll />
              </div>
              <div className="mt-px"><Check w={185}>Oldalszámok <U>h</U>elyett hiperhivatkozások</Check></div>
            </div>
          </div>
          <div className="-ml-px mt-[3px] flex items-center gap-[6px]"><Fit w={43}>Általános</Fit><i className="mr-[6px] h-px grow bg-[#d5acb2]" /></div>
          <div className="ml-[8px] mt-[6px] flex items-center"><Fit w={64}>F<U>o</U>rmátumok:</Fit><Combo className="ml-[9px] w-[122px]"><Fit w={46}>Sablonból</Fit></Combo></div>
          <div className="ml-[8px] mt-[3px] flex items-center"><Fit w={39}>S<U>z</U>intek:</Fit>
            <div className="ml-[34px] flex h-[20px] w-[65px] items-center border border-[#a77c84] pl-[2px]">3
              <svg width="16" height="18" viewBox="0 0 16 18" className="ml-auto"><path d="M.5.500h15v8H.5zM.5 9.500h15v8H.5z" fill="#f3cfd4" stroke="#ab8289" /><path d="M5 6.500l3-3 3 3zM5 11.500l3 3 3-3z" fill="#391c23" /></svg>
            </div>
          </div>
          <div className="mt-[29px] flex gap-[10px] pl-[318px]">
            <div className={`${button} w-[79px] border-[#ae858c] bg-[#e4c0c6]`}><Fit w={62}>B<U>e</U>állítások...</Fit></div>
            <div className={`${button} w-[77px] border-[#ae858c] bg-[#e4c0c6]`}><Fit w={60}><U>M</U>ódosítás...</Fit></div>
          </div>
        </div>
        <div className="mt-[9px] flex justify-end gap-[10px] pr-[7px]">
          <div className={`${button} w-[74px] border-[#4a61a4] bg-[#e5ccd8]`}><Fit w={15}>OK</Fit></div>
          <div className={`${button} w-[74px] border-[#ae858c] bg-[#e4c0c6]`}><Fit w={32}>Mégse</Fit></div>
        </div>
      </div>
    </div>
  );
}

export default function App() {
  return (
    <div className="relative flex h-[729px] w-[1366px] flex-col overflow-hidden bg-[#9ebbe2] font-['Noto_Sans',sans-serif]">
      <TitleBar />
      <Tabs />
      <OfficeButton />
      <Ribbon />
      <main className="flex min-h-0 grow">
        <div className="flex w-[1143px] shrink-0 flex-col bg-[#9ebbe2]">
          <HRuler />
          <div className="flex min-h-0 grow"><VRuler /><Canvas /></div>
        </div>
        <VScroll />
        <StylesPane />
      </main>
      <StatusBar />
      <Dialog />
    </div>
  );
}
